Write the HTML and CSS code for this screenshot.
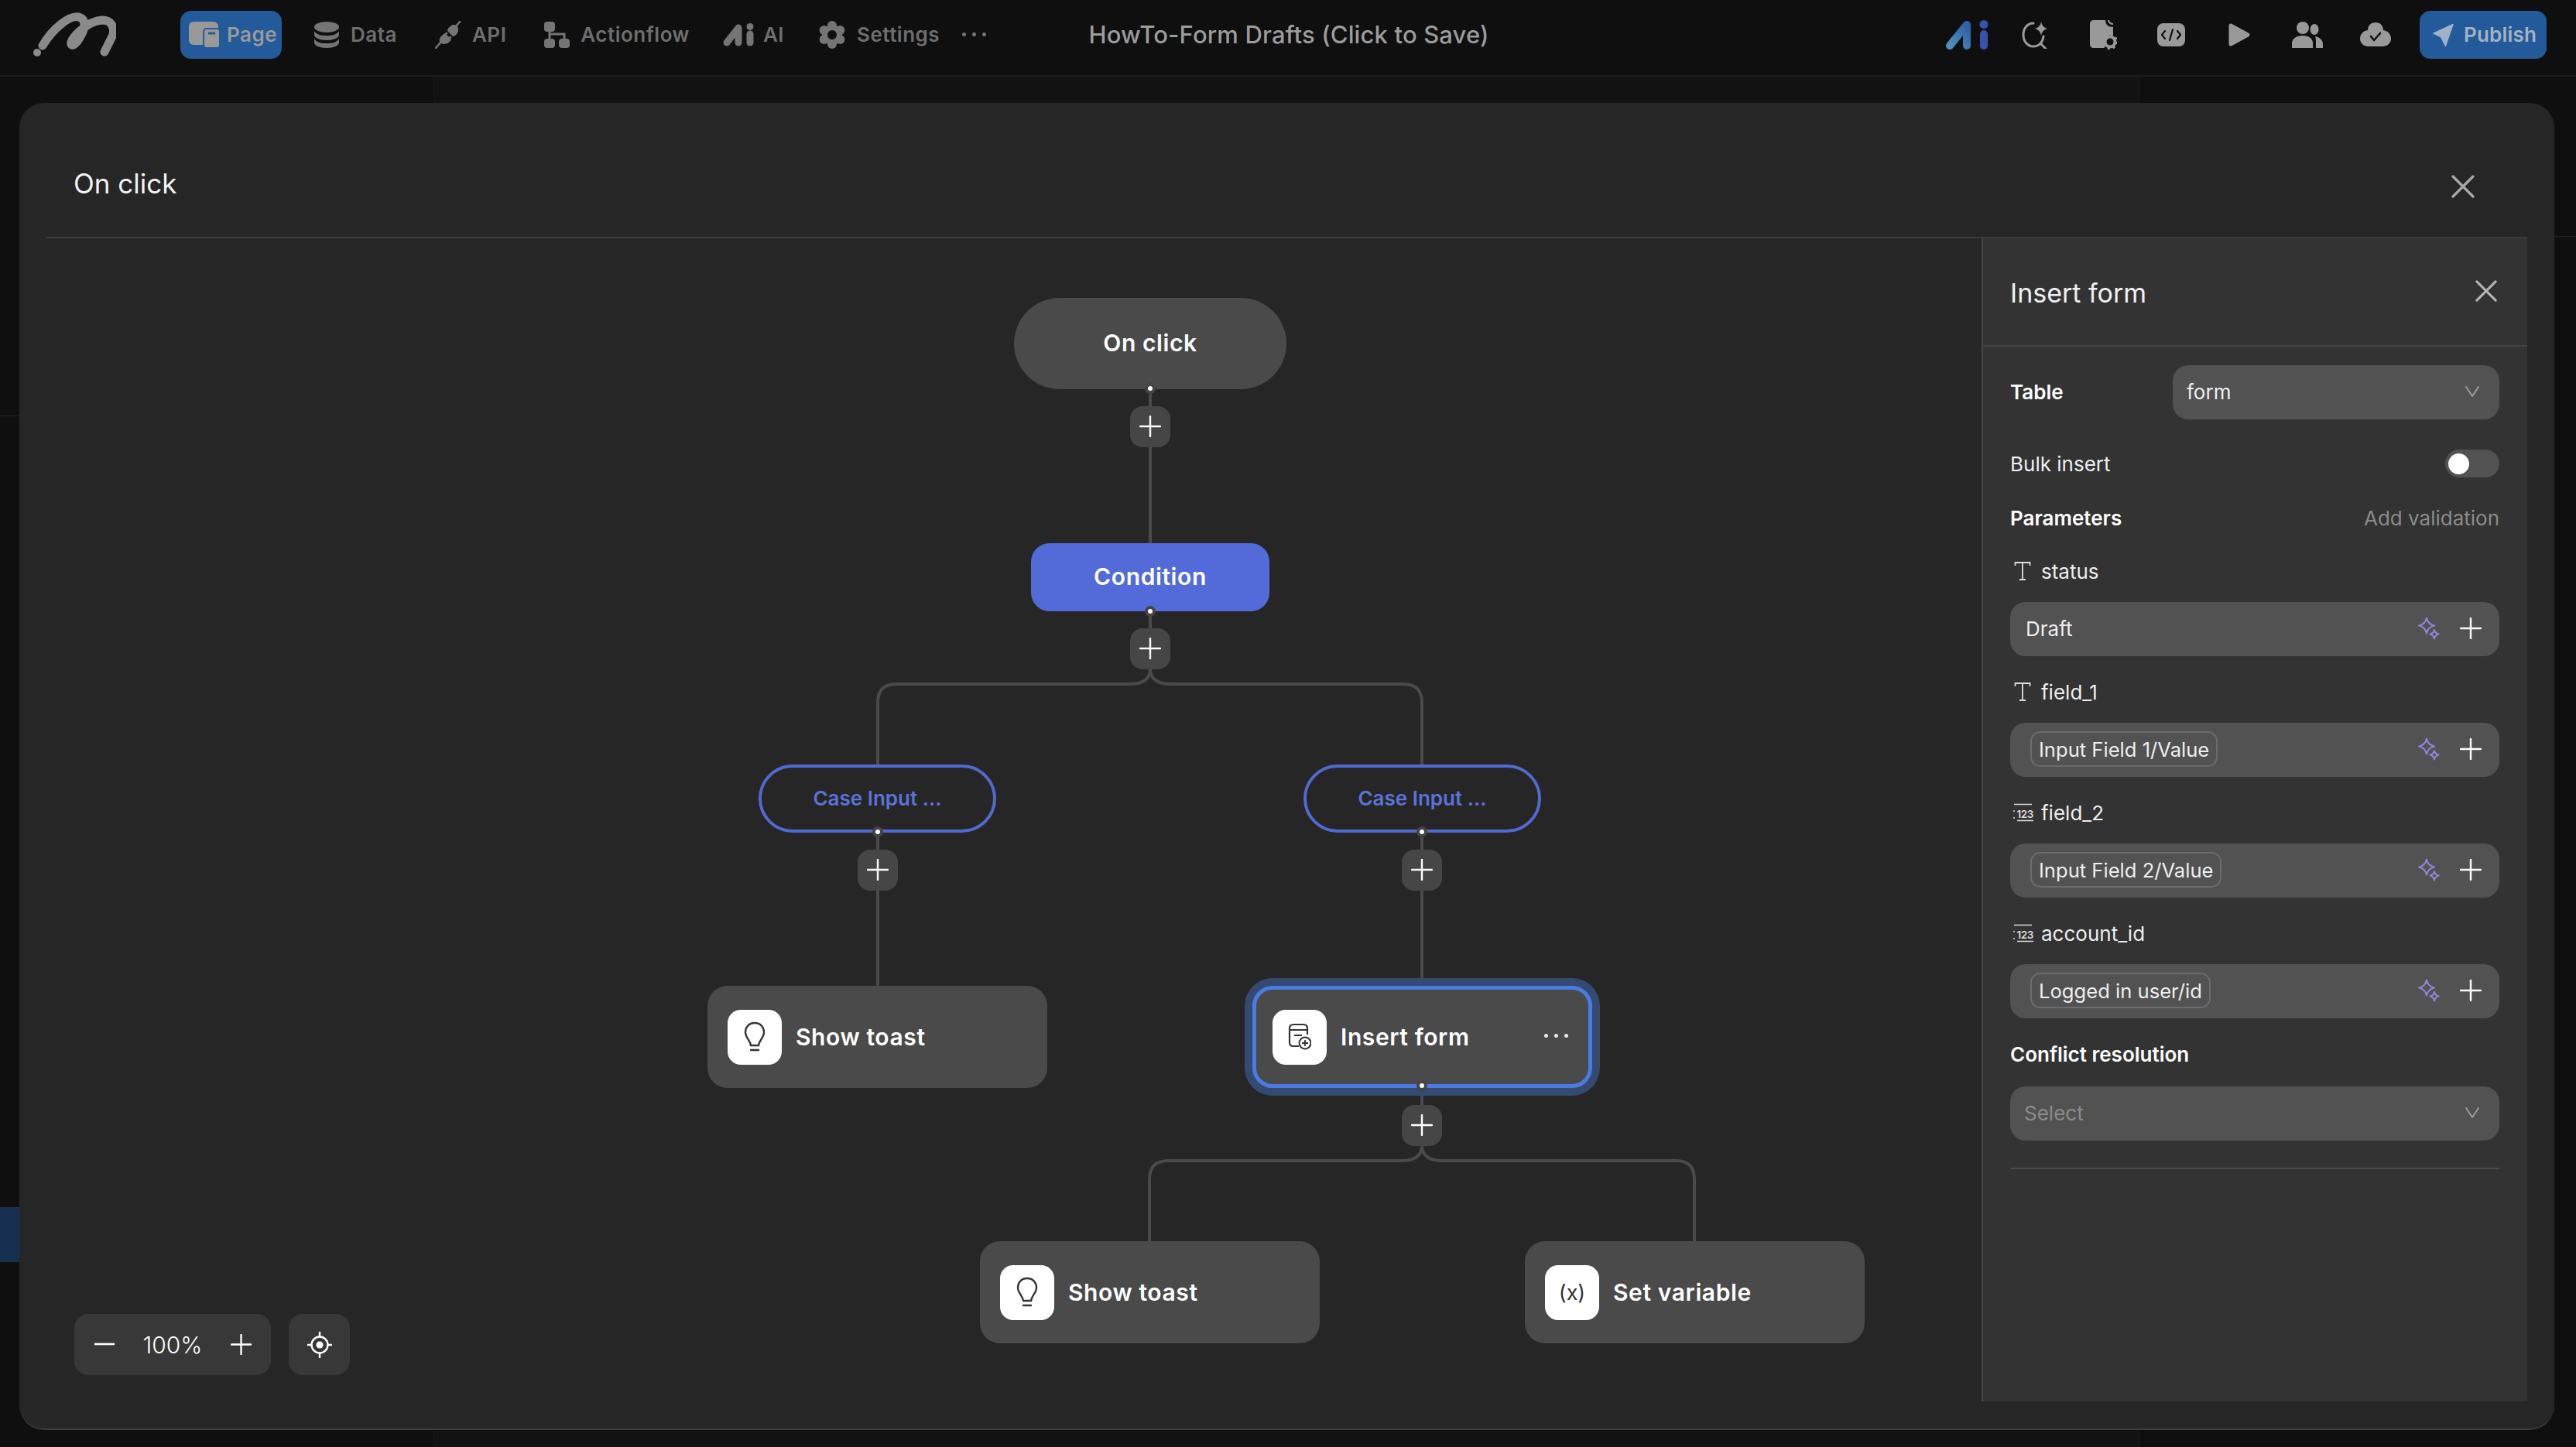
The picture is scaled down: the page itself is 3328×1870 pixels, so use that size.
FILE: index.html
```html
<!doctype html>
<html lang="en">
<head>
<meta charset="utf-8">
<title>HowTo-Form Drafts</title>
<link rel="stylesheet" href="styles.css">
</head>
<body>

<!-- shared icons -->
<svg class="sprites" width="0" height="0">
	<symbol id="i-plus" viewBox="0 0 28 28"><path d="M14 1V27M1 14H27" fill="none" stroke="currentColor" stroke-width="2.4" stroke-linecap="round"/></symbol>
	<symbol id="i-close" viewBox="0 0 30 30"><path d="M2 2L28 28M28 2L2 28" fill="none" stroke="currentColor" stroke-width="3.2" stroke-linecap="round"/></symbol>
	<symbol id="i-chevron" viewBox="0 0 18 14"><path d="M1 1L9 13L17 1" fill="none" stroke="currentColor" stroke-width="1.8" stroke-linecap="round" stroke-linejoin="round"/></symbol>
	<symbol id="i-stars" viewBox="0 0 28 30"><path d="M11 1.5Q12.5 9.5 21 11.5Q12.5 13.5 11 21.5Q9.5 13.5 1 11.5Q9.5 9.5 11 1.5ZM21 17Q21.8 21.3 26.5 22.5Q21.8 23.7 21 28.5Q20.2 23.7 15.5 22.5Q20.2 21.3 21 17Z" fill="none" stroke="#9483d6" stroke-width="2.1" stroke-linejoin="round"/></symbol>
	<symbol id="i-text" viewBox="0 0 22 26"><path d="M1.5 6V2H20.5V6M11 2V24M7 24H15" fill="none" stroke="currentColor" stroke-width="1.8"/></symbol>
	<symbol id="i-bulb" viewBox="0 0 30 40"><path d="M15 2C7 2 3 8 3 14C3 21 9 24 10 31H20C21 24 27 21 27 14C27 8 23 2 15 2ZM10 37H20" fill="none" stroke="#333" stroke-width="2.4" stroke-linecap="round"/></symbol>
</svg>

<header class="topbar">
	<div class="bar-left">
		<svg class="logo" viewBox="0 0 110 60">
			<path d="M15 44C28 22 50 4 62 7C72 10 70 22 64 32C60 40 54 46 52 42C50 36 72 12 92 11C104 11 108 20 106 30L95 52" fill="none" stroke="#8a8a8a" stroke-width="11" stroke-linecap="round" stroke-linejoin="round"/>
			<circle cx="8" cy="53" r="5" fill="#8a8a8a"/>
		</svg>
		<nav class="nav">
			<a class="nav-item active">
				<svg class="ico-page" viewBox="0 0 40 34"><rect x="0" y="0" width="38" height="30" rx="6" fill="#999"/><rect x="19" y="9" width="21" height="25" rx="4" fill="#999" stroke="#235a9a" stroke-width="2"/><path d="M25 15H34" stroke="#235a9a" stroke-width="3"/></svg>
				Page
			</a>
			<a class="nav-item">
				<svg class="ico-data" viewBox="0 0 34 34"><ellipse cx="17" cy="7" rx="16" ry="7" fill="#757575"/><path d="M1 12C4 17 10 18 17 18S30 17 33 12V17C33 21 26 24 17 24S1 21 1 17ZM1 22C4 27 10 28 17 28S30 27 33 22V27C33 31 26 34 17 34S1 31 1 27Z" fill="#757575"/></svg>
				Data
			</a>
			<a class="nav-item">
				<svg class="ico-api" viewBox="0 0 34 36"><g fill="#757575"><path d="M13 16L21 24C17 31 10 31 7 28C4 25 6 20 13 16Z"/><path d="M21 6C26 3 31 7 30 13C29 17 26 20 23 20L16 13C16 10 18 8 21 6Z"/></g><path d="M1 35L7 28M28 6L32 1M11 20L15 16M16 25L20 21" stroke="#757575" stroke-width="2.6" stroke-linecap="round"/></svg>
				API
			</a>
			<a class="nav-item item-flow">
				<svg class="ico-flow" viewBox="0 0 33 34"><g fill="#757575"><rect x="0" y="0" width="14" height="13" rx="4"/><rect x="0" y="22" width="14" height="12" rx="4"/><rect x="19" y="22" width="14" height="12" rx="4"/></g><path d="M7 12V22M7 16H26V22" fill="none" stroke="#757575" stroke-width="3"/></svg>
				Actionflow
			</a>
			<a class="nav-item item-ai">
				<svg class="ico-ai" viewBox="0 0 42 30"><path d="M5 25L20 6V25" fill="none" stroke="#757575" stroke-width="9" stroke-linecap="round" stroke-linejoin="round"/><path d="M35 14V25" stroke="#757575" stroke-width="9" stroke-linecap="round"/><circle cx="35" cy="4.5" r="4.5" fill="#757575"/></svg>
				AI
			</a>
			<a class="nav-item">
				<svg class="ico-gear" viewBox="0 0 36 36"><g fill="#757575"><circle cx="18" cy="18" r="13"/><circle cx="18" cy="6" r="6"/><circle cx="18" cy="30" r="6"/><circle cx="7.6" cy="12" r="6"/><circle cx="28.4" cy="12" r="6"/><circle cx="7.6" cy="24" r="6"/><circle cx="28.4" cy="24" r="6"/></g><circle cx="18" cy="18" r="6" fill="#0f0f0f"/></svg>
				Settings
			</a>
			<a class="nav-dots"><i></i><i></i><i></i></a>
		</nav>
	</div>
	<div class="doc-title">HowTo-Form Drafts (Click to Save)</div>
	<div class="bar-right">
		<span class="slot">
			<svg class="ico-ailogo" viewBox="0 0 55 38">
				<defs><linearGradient id="aigrad" x1="0" y1="1" x2="1" y2="0"><stop offset="0" stop-color="#4f8fb8"/><stop offset="1" stop-color="#2f5fa8"/></linearGradient></defs>
				<path d="M5 33L27 6V33" fill="none" stroke="url(#aigrad)" stroke-width="10" stroke-linecap="round" stroke-linejoin="round"/>
				<path d="M49 18V33" stroke="#3a50ad" stroke-width="10" stroke-linecap="round"/><circle cx="49" cy="5.5" r="5.5" fill="#3a50ad"/>
			</svg>
		</span>
		<span class="slot">
			<svg class="ico-search" viewBox="0 0 34 36"><path d="M15 3C7 3 2 10 2 18C2 27 8 33 15 33C22 33 27 28 28 20M24 29L31 36" fill="none" stroke="#999" stroke-width="3" stroke-linecap="round"/><path d="M25 1Q26 8 33 10Q26 12 25 19Q24 12 17 10Q24 8 25 1Z" fill="#999"/></svg>
		</span>
		<span class="slot">
			<svg class="ico-file" viewBox="0 0 35 38"><path d="M5 0H20C20 6 24 9 30 9V19C22 18 16 25 19 36H5C2 36 0 34 0 31V5C0 2 2 0 5 0Z" fill="#999"/><path d="M24 0C24 3 27 5 30 5" fill="none" stroke="#999" stroke-width="2"/><circle cx="26" cy="28" r="6.5" fill="none" stroke="#999" stroke-width="4"/><circle cx="26" cy="28" r="9" fill="none" stroke="#999" stroke-width="2.4" stroke-dasharray="3.2 3.9"/></svg>
		</span>
		<span class="slot">
			<svg class="ico-code" viewBox="0 0 36 30"><rect width="36" height="30" rx="8" fill="#999"/><path d="M10 10L6 15L10 20M26 10L30 15L26 20M20 8L16 22" fill="none" stroke="#111" stroke-width="2.2" stroke-linecap="round" stroke-linejoin="round"/></svg>
		</span>
		<span class="slot">
			<svg class="ico-play" viewBox="0 0 28 30"><path d="M3 3L25 15L3 27Z" fill="#999" stroke="#999" stroke-width="5" stroke-linejoin="round"/></svg>
		</span>
		<span class="slot">
			<svg class="ico-users" viewBox="0 0 40 34"><g fill="#999"><ellipse cx="14" cy="8" rx="8" ry="8"/><path d="M0 34V28C0 22 6 18 14 18C22 18 27 22 27 28V34Z"/><ellipse cx="29" cy="10" rx="5.5" ry="7"/><path d="M30 19C36 20 40 24 40 29V34H31V28C31 25 31 22 30 19Z"/></g></svg>
		</span>
		<span class="slot">
			<svg class="ico-cloud" viewBox="0 0 40 31"><path d="M20 0C26 0 30 4 30 10C36 11 40 15 40 21C40 27 35 31 29 31H11C5 31 0 27 0 21C0 15 4 11 10 10C10 4 14 0 20 0Z" fill="#999"/><path d="M14 18L18 23L26 14" fill="none" stroke="#111" stroke-width="2.6" stroke-linecap="round" stroke-linejoin="round"/></svg>
		</span>
		<a class="publish">
			<svg class="ico-plane" viewBox="0 0 28 30"><path d="M27 1L1 13L11 18L17 30Z" fill="#9fb2c8" stroke="#9fb2c8" stroke-width="1.5" stroke-linejoin="round"/></svg>
			Publish
		</a>
	</div>
</header>

<!-- the page behind the dialog -->
<main class="backdrop">
	<div class="back-left">
		<div class="back-row"></div>
		<div class="back-selected"></div>
	</div>
	<div class="back-mid"></div>
	<div class="back-right"><div class="back-head"></div></div>
</main>

<section class="modal">
	<div class="modal-head">
		<h1>On click</h1>
		<svg class="modal-close"><use href="#i-close"/></svg>
	</div>
	<div class="modal-body">
		<div class="canvas">
			<svg class="edges" viewBox="0 0 2500 1504">
				<path d="M1426 195V394M1426 482V556"/>
				<path d="M1426 556Q1426 576 1399 576H1098Q1074 576 1074 600V680M1426 556Q1426 576 1453 576H1753Q1777 576 1777 600V680"/>
				<path d="M1074 768V966M1777 768V966M1777 1098V1120"/>
				<path d="M1777 1172Q1777 1192 1750 1192H1449Q1425 1192 1425 1216V1296M1777 1172Q1777 1192 1804 1192H2105Q2129 1192 2129 1216V1296"/>
			</svg>

			<div class="node start n-start">On click</div>
			<div class="node condition n-cond">Condition</div>
			<div class="node case n-case-l">Case Input ...</div>
			<div class="node case n-case-r">Case Input ...</div>

			<div class="node action n-toast-1">
				<span class="node-icon"><svg class="ico-bulb"><use href="#i-bulb"/></svg></span>Show toast
			</div>
			<div class="node action selected n-insert">
				<span class="node-icon">
					<svg class="ico-form" viewBox="0 0 30 36"><path d="M14 30H7C4 30 2 28 2 25V7C2 4 4 2 7 2H20C23 2 25 4 25 7V15" fill="none" stroke="#333" stroke-width="2.2"/><path d="M2 9H25M8 16H18" stroke="#333" stroke-width="2.2"/><circle cx="22" cy="26" r="7.5" fill="#fff" stroke="#333" stroke-width="2"/><path d="M22 22V30M18 26H26" stroke="#333" stroke-width="1.8"/></svg>
				</span>Insert form
				<span class="node-more"><i></i><i></i><i></i></span>
			</div>
			<div class="node action n-toast-2">
				<span class="node-icon"><svg class="ico-bulb"><use href="#i-bulb"/></svg></span>Show toast
			</div>
			<div class="node action n-setvar">
				<span class="node-icon var-icon">(x)</span>Set variable
			</div>

			<button class="add add-1"><svg><use href="#i-plus"/></svg></button>
			<button class="add add-2"><svg><use href="#i-plus"/></svg></button>
			<button class="add add-3"><svg><use href="#i-plus"/></svg></button>
			<button class="add add-4"><svg><use href="#i-plus"/></svg></button>
			<button class="add add-5"><svg><use href="#i-plus"/></svg></button>

			<i class="port port-1"></i>
			<i class="port port-2"></i>
			<i class="port port-3"></i>
			<i class="port port-4"></i>
			<i class="port port-5"></i>

			<div class="zoombar">
				<svg class="zoom-ico"><path d="M1 13H27" stroke="currentColor" stroke-width="2.6"/></svg>
				<span class="zoom-val">100%</span>
				<svg class="zoom-ico"><use href="#i-plus"/></svg>
			</div>
			<div class="recenter">
				<svg viewBox="0 0 32 36"><circle cx="16" cy="18" r="10.5" fill="none" stroke="#fff" stroke-width="2.4"/><circle cx="16" cy="18" r="4.5" fill="#fff"/><path d="M16 1V7M16 29V35M0 18H5M27 18H32" stroke="#fff" stroke-width="2.4"/></svg>
			</div>
		</div>

		<aside class="panel">
			<div class="panel-head">
				<h2>Insert form</h2>
				<svg class="panel-close"><use href="#i-close"/></svg>
			</div>
			<div class="panel-body">
				<div class="table-row">
					<label class="strong">Table</label>
					<div class="field select"><span>form</span><svg class="chev"><use href="#i-chevron"/></svg></div>
				</div>
				<div class="bulk-row">
					<span>Bulk insert</span>
					<span class="toggle"><i></i></span>
				</div>
				<div class="params-row">
					<span class="strong">Parameters</span>
					<span class="muted">Add validation</span>
				</div>

				<div class="param">
					<div class="param-name"><svg class="type-t"><use href="#i-text"/></svg>status</div>
					<div class="field"><span class="plain">Draft</span><svg class="stars"><use href="#i-stars"/></svg><svg class="fplus"><use href="#i-plus"/></svg></div>
				</div>
				<div class="param">
					<div class="param-name"><svg class="type-t"><use href="#i-text"/></svg>field_1</div>
					<div class="field"><span class="chip">Input Field 1/Value</span><svg class="stars"><use href="#i-stars"/></svg><svg class="fplus"><use href="#i-plus"/></svg></div>
				</div>
				<div class="param">
					<div class="param-name">
						<svg class="type-n" viewBox="0 0 27 24"><path d="M2 1.5H25M1 10H3M1 19H3M6 22.5H27" fill="none" stroke="currentColor" stroke-width="1.4"/><text x="5.5" y="19" class="num-text">123</text></svg>field_2
					</div>
					<div class="field"><span class="chip">Input Field 2/Value</span><svg class="stars"><use href="#i-stars"/></svg><svg class="fplus"><use href="#i-plus"/></svg></div>
				</div>
				<div class="param">
					<div class="param-name">
						<svg class="type-n" viewBox="0 0 27 24"><path d="M2 1.5H25M1 10H3M1 19H3M6 22.5H27" fill="none" stroke="currentColor" stroke-width="1.4"/><text x="5.5" y="19" class="num-text">123</text></svg>account_id
					</div>
					<div class="field"><span class="chip">Logged in user/id</span><svg class="stars"><use href="#i-stars"/></svg><svg class="fplus"><use href="#i-plus"/></svg></div>
				</div>

				<div class="conflict strong">Conflict resolution</div>
				<div class="field select wide"><span class="muted">Select</span><svg class="chev"><use href="#i-chevron"/></svg></div>
				<div class="panel-rule"></div>
			</div>
		</aside>
	</div>
</section>

</body>
</html>
```

FILE: styles.css
```css
* { box-sizing: border-box; }
html, body { margin: 0; height: 100%; }
body {
	width: 3328px;
	height: 1870px;
	overflow: hidden;
	position: relative;
	display: flex;
	flex-direction: column;
	background: #0f0f0f;
	color: #fff;
	font-family: Inter, "Noto Sans", "Liberation Sans", sans-serif;
}
.sprites { position: absolute; }
.num-text { font: 600 13.5px Inter, sans-serif; fill: currentColor; letter-spacing: -.4px; }

/* top bar */
.topbar {
	height: 99px;
	flex: none;
	display: grid;
	grid-template-columns: 1fr auto 1fr;
	align-items: center;
	padding: 0 38px 8px 40px;
	border-bottom: 2px solid #1d1d1d;
}
.bar-left, .bar-right, .nav { display: flex; align-items: center; }
.bar-right { justify-content: flex-end; }
.logo { width: 110px; height: 60px; margin-right: 83px; }
.nav { gap: 49px; }
.nav-item {
	display: flex;
	align-items: center;
	gap: 14px;
	font-size: 26px;
	font-weight: 600;
	letter-spacing: .5px;
	color: #6e6e6e;
}
.nav-item.active {
	width: 131px;
	height: 62px;
	margin-right: -8px;
	padding-left: 11px;
	gap: 9px;
	border-radius: 14px;
	background: #235a9a;
	color: #9a9a9a;
}
.item-flow { margin-right: -6px; }
.item-ai { margin-right: -5px; }
.ico-page { width: 40px; height: 34px; }
.ico-data { width: 34px; height: 34px; }
.ico-api { width: 34px; height: 36px; }
.ico-flow { width: 33px; height: 34px; }
.ico-ai { width: 42px; height: 30px; margin-right: -4px; }
.ico-gear { width: 36px; height: 36px; }
.nav-dots { display: flex; gap: 8px; margin-left: -20px; }
.nav-dots i { width: 5px; height: 5px; border-radius: 50%; background: #757575; }
.doc-title { font-size: 31px; font-weight: 500; letter-spacing: .15px; color: #9c9c9c; }
.slot { width: 88px; display: flex; justify-content: center; align-items: center; }
.ico-ailogo { width: 55px; height: 38px; }
.ico-search { width: 34px; height: 36px; }
.ico-file { width: 35px; height: 38px; }
.ico-code { width: 36px; height: 30px; }
.ico-play { width: 28px; height: 30px; }
.ico-users { width: 40px; height: 34px; }
.ico-cloud { width: 40px; height: 31px; }
.publish {
	width: 164px;
	height: 62px;
	margin-left: 13px;
	display: flex;
	align-items: center;
	gap: 13px;
	padding-left: 17px;
	border-radius: 14px;
	background: #235a9a;
	color: #a4b3c4;
	font-size: 26px;
	font-weight: 600;
	letter-spacing: .2px;
}
.ico-plane { width: 27px; height: 30px; }

/* what shows behind the dialog */
.backdrop {
	flex: 1;
	display: grid;
	grid-template-columns: 561px 1fr 565px;
}
.back-left { border-right: 1px solid #191919; }
.back-row { height: 439px; border-bottom: 1px solid #222; }
.back-selected { height: 71px; width: 25px; margin-top: 1022px; background: #18304f; }
.back-mid { background: #121212; }
.back-right { border-left: 1px solid #191919; }
.back-head { height: 207px; border-bottom: 1px solid #222; }

/* dialog */
.modal {
	position: absolute;
	left: 25px;
	top: 133px;
	width: 3275px;
	height: 1715px;
	padding: 0 35px 35px;
	display: flex;
	flex-direction: column;
	background: #262626;
	border-radius: 32px;
	border-bottom: 2px solid #3c3c3c;
}
.modal-head {
	height: 175px;
	flex: none;
	display: flex;
	align-items: center;
	justify-content: space-between;
	padding: 35px 68px 0 35px;
	border-bottom: 2px solid #3a3a3a;
}
.modal-head h1 { margin: 0; font-size: 35px; font-weight: 400; color: #f2f2f2; }
.modal-close { width: 30px; height: 30px; margin-top: 8px; color: #a8a8a8; }
.modal-body { flex: 1; display: flex; min-height: 0; }

/* diagram */
.canvas { flex: 1; position: relative; }
.edges {
	position: absolute;
	left: 0;
	top: 0;
	width: 2500px;
	height: 1504px;
	fill: none;
	stroke: #4a4a4a;
	stroke-width: 4;
}
.node {
	position: absolute;
	display: flex;
	align-items: center;
	justify-content: center;
	padding-bottom: 2px;
	font-size: 30px;
	font-weight: 600;
	letter-spacing: .6px;
	background: #4a4a4a;
}
.start { width: 352px; height: 118px; border-radius: 59px; }
.n-start { left: 1250px; top: 77px; }
.condition { width: 308px; height: 88px; border-radius: 24px; background: #526bd8; }
.n-cond { left: 1272px; top: 394px; }
.case {
	width: 307px;
	height: 88px;
	border-radius: 44px;
	border: 4px solid #506ad2;
	background: #262626;
	color: #5b73da;
	font-size: 26px;
	letter-spacing: 0;
}
.n-case-l { left: 920px; top: 680px; }
.n-case-r { left: 1624px; top: 680px; }
.action {
	width: 439px;
	height: 132px;
	justify-content: flex-start;
	padding-left: 26px;
	padding-bottom: 0;
	gap: 18px;
	border-radius: 26px;
}
.n-toast-1 { left: 854px; top: 966px; }
.n-insert { left: 1558px; top: 966px; }
.n-toast-2 { left: 1206px; top: 1296px; }
.n-setvar { left: 1910px; top: 1296px; }
.selected {
	border: 5px solid #4a7be0;
	padding-left: 21px;
	box-shadow: 0 0 0 10px #344a70;
}
.node-icon {
	width: 70px;
	height: 71px;
	display: flex;
	align-items: center;
	justify-content: center;
	border-radius: 17px;
	background: #fff;
}
.ico-bulb { width: 30px; height: 40px; }
.ico-form { width: 30px; height: 36px; }
.var-icon { color: #333; font-size: 27px; font-weight: 400; letter-spacing: 0; }
.node-more { display: flex; gap: 8px; margin-left: auto; margin-right: 26px; margin-top: -4px; }
.node-more i { width: 5px; height: 5px; border-radius: 50%; background: #e8e8e8; }
.add {
	position: absolute;
	width: 52px;
	height: 53px;
	padding: 0 0 2px;
	display: flex;
	align-items: center;
	justify-content: center;
	border: 0;
	border-radius: 16px;
	background: #464646;
	color: #fff;
}
.add svg { width: 28px; height: 28px; }
.add-1 { left: 1400px; top: 217px; }
.add-2 { left: 1400px; top: 504px; }
.add-3 { left: 1048px; top: 790px; }
.add-4 { left: 1751px; top: 790px; }
.add-5 { left: 1751px; top: 1120px; }
.port {
	position: absolute;
	width: 14px;
	height: 14px;
	border-radius: 50%;
	background: #fff;
	border: 4px solid #444;
}
.port-1 { left: 1419px; top: 187px; }
.port-2 { left: 1419px; top: 475px; }
.port-3 { left: 1067px; top: 760px; }
.port-4 { left: 1770px; top: 760px; }
.port-5 { left: 1770px; top: 1088px; }
.zoombar {
	position: absolute;
	left: 36px;
	top: 1390px;
	width: 254px;
	height: 79px;
	display: flex;
	align-items: center;
	justify-content: space-between;
	padding: 0 25px;
	border-radius: 18px;
	background: #383838;
}
.zoom-ico { width: 27px; height: 27px; color: #fff; }
.zoom-val { font-size: 30px; font-weight: 300; }
.recenter {
	position: absolute;
	left: 313px;
	top: 1390px;
	width: 79px;
	height: 79px;
	display: flex;
	align-items: center;
	justify-content: center;
	border-radius: 18px;
	background: #383838;
}
.recenter svg { width: 32px; height: 36px; }

/* side panel */
.panel {
	width: 705px;
	flex: none;
	background: #333;
	border-left: 2px solid #444;
}
.panel-head {
	height: 140px;
	display: flex;
	align-items: center;
	justify-content: space-between;
	padding: 2px 39px 0 35px;
	border-bottom: 2px solid #444;
}
.panel-head h2 { margin: 0; font-size: 34px; font-weight: 400; color: #f0f0f0; }
.panel-close { width: 28px; height: 28px; color: #b5b5b5; margin-top: -4px; }
.panel-body { padding: 0 36px 0 35px; font-size: 26px; color: #eee; }
.strong { font-weight: 600; color: #fff; }
.muted { color: #8b8b8b; }
.table-row { display: flex; align-items: center; margin-top: 24px; }
.table-row label { width: 210px; margin-top: -2px; }
.table-row .field { flex: 1; }
.bulk-row, .params-row { display: flex; align-items: center; justify-content: space-between; }
.bulk-row { height: 36px; margin-top: 39px; }
.params-row { height: 30px; margin-top: 37px; }
.toggle {
	width: 70px;
	height: 36px;
	padding: 4px;
	border-radius: 18px;
	background: #525252;
}
.toggle i { display: block; width: 27px; height: 27px; margin-top: 1px; border-radius: 50%; background: #fff; }
.param { margin-top: 40px; }
.param + .param { margin-top: 32px; }
.param-name { height: 30px; padding-bottom: 2px; display: flex; align-items: center; gap: 11px; }
.type-t { width: 22px; height: 26px; margin-left: 5px; margin-right: 2px; color: #ddd; }
.type-n { width: 27px; height: 24px; color: #ddd; margin-left: 3px; margin-right: -1px; }
.field {
	height: 70px;
	margin-top: 24px;
	display: flex;
	align-items: center;
	padding: 0 23px 2px 27px;
	border-radius: 20px;
	background: #525252;
}
.field .plain { margin-right: auto; margin-left: -7px; }
.chip {
	height: 46px;
	display: flex;
	align-items: center;
	margin-right: auto;
	padding: 0 9px;
	border: 2px solid #6c6c6c;
	border-radius: 13px;
	margin-left: -1px;
	font-size: 25.6px;
}
.stars { width: 28px; height: 30px; margin-right: 26px; }
.fplus { width: 28px; height: 28px; color: #fff; }
.select { justify-content: space-between; margin-top: 0; padding: 0 26px 2px 18px; }
.chev { width: 18px; height: 14px; color: #a0a0a0; }
.conflict { height: 30px; margin-top: 33px; line-height: 28px; }
.wide { margin-top: 25px; }
.panel-rule { height: 2px; margin-top: 35px; background: #4a4a4a; }
```
